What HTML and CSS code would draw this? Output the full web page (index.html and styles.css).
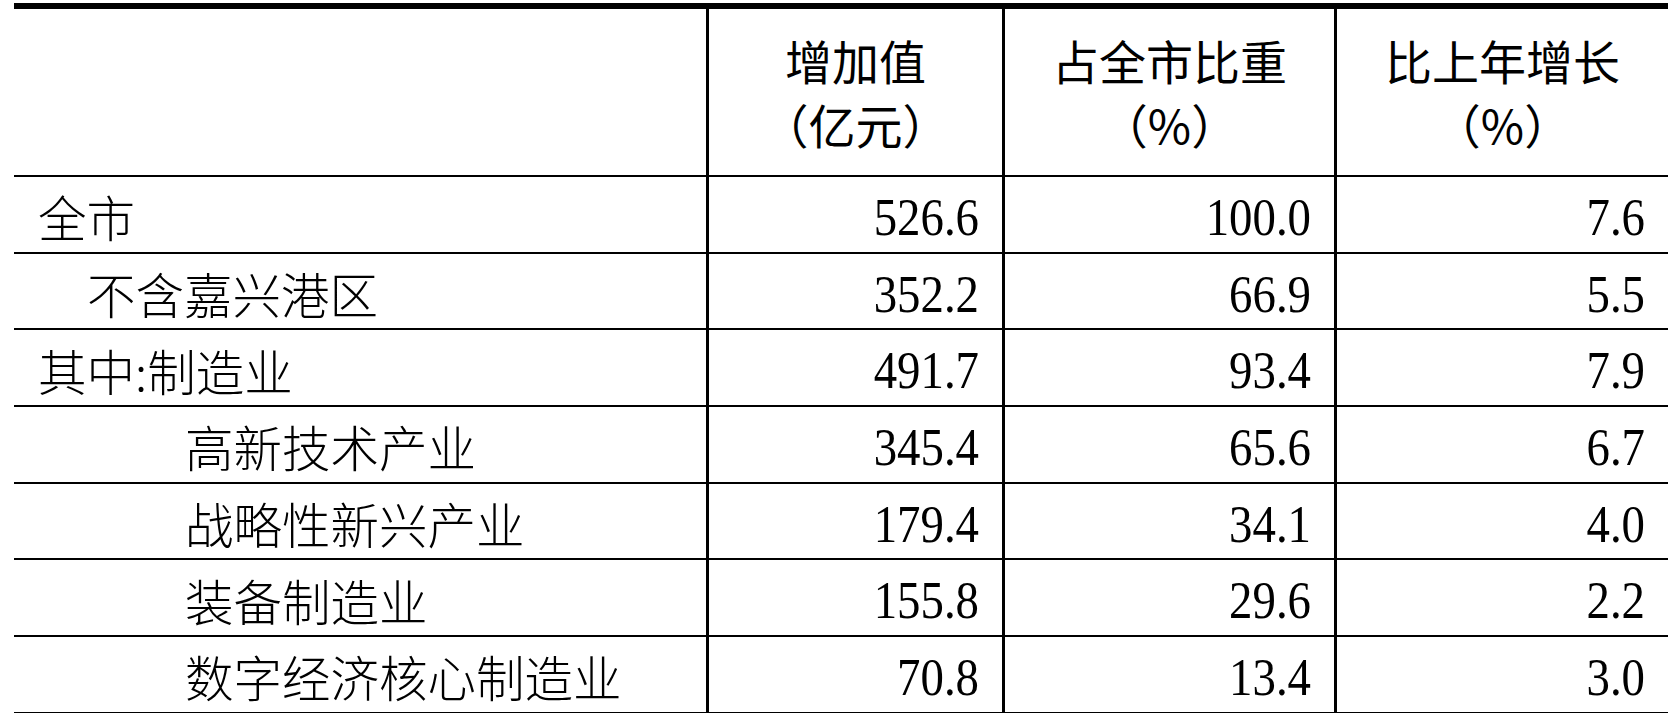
FILE: index.html
```html
<!DOCTYPE html>
<html lang="zh-CN">
<head>
<meta charset="utf-8">
<title>工业增加值</title>
<link rel="stylesheet" href="styles.css">
</head>
<body>
<div class="sheet">
  <div class="cell head first"></div>
  <div class="cell head"><span>增加值</span><span>（亿元）</span></div>
  <div class="cell head"><span>占全市比重</span><span>（%）</span></div>
  <div class="cell head last"><span>比上年增长</span><span>（%）</span></div>

  <div class="cell label">全市</div>
  <div class="cell num"><span class="v">526.6</span></div>
  <div class="cell num"><span class="v">100.0</span></div>
  <div class="cell num last"><span class="v">7.6</span></div>

  <div class="cell label ind1">不含嘉兴港区</div>
  <div class="cell num"><span class="v">352.2</span></div>
  <div class="cell num"><span class="v">66.9</span></div>
  <div class="cell num last"><span class="v">5.5</span></div>

  <div class="cell label">其中:制造业</div>
  <div class="cell num"><span class="v">491.7</span></div>
  <div class="cell num"><span class="v">93.4</span></div>
  <div class="cell num last"><span class="v">7.9</span></div>

  <div class="cell label ind3">高新技术产业</div>
  <div class="cell num"><span class="v">345.4</span></div>
  <div class="cell num"><span class="v">65.6</span></div>
  <div class="cell num last"><span class="v">6.7</span></div>

  <div class="cell label ind3">战略性新兴产业</div>
  <div class="cell num"><span class="v">179.4</span></div>
  <div class="cell num"><span class="v">34.1</span></div>
  <div class="cell num last"><span class="v">4.0</span></div>

  <div class="cell label ind3">装备制造业</div>
  <div class="cell num"><span class="v">155.8</span></div>
  <div class="cell num"><span class="v">29.6</span></div>
  <div class="cell num last"><span class="v">2.2</span></div>

  <div class="cell label ind3">数字经济核心制造业</div>
  <div class="cell num"><span class="v">70.8</span></div>
  <div class="cell num"><span class="v">13.4</span></div>
  <div class="cell num last"><span class="v">3.0</span></div>
</div>
</body>
</html>
```
FILE: styles.css
```css
html, body {
  margin: 0;
  padding: 0;
  background: #ffffff;
  overflow: hidden;
  height: 713px;
}

.sheet {
  margin: 3px 0 0 14px;
  width: 1654px;
  border-top: 6px solid #000;
  display: grid;
  grid-template-columns: 695px 296px 332px 331px;
  grid-template-rows: 168px;
  grid-auto-rows: 76.7px;
  color: #000;
}

.cell {
  box-sizing: border-box;
  border-right: 3px solid #000;
  border-bottom: 2px solid #000;
  display: flex;
  align-items: center;
}

.cell.last {
  border-right: none;
}

.head {
  flex-direction: column;
  justify-content: center;
  font-family: "Noto Sans CJK SC", sans-serif;
  font-weight: 400;
  font-size: 47px;
  line-height: 64px;
  padding-top: 0;
}

.label {
  font-family: "Noto Sans CJK SC", sans-serif;
  font-weight: 300;
  font-size: 48.5px;
  padding-left: 24px;
  padding-top: 4px;
}

.ind1 { padding-left: 73px; }
.ind3 { padding-left: 171px; }

.num {
  justify-content: flex-end;
  font-family: "Liberation Serif", "Times New Roman", serif;
  font-size: 52px;
  padding-right: 23px;
  padding-top: 6px;
}

.num .v {
  display: inline-block;
  transform: scaleX(0.9);
  transform-origin: right center;
}
```
